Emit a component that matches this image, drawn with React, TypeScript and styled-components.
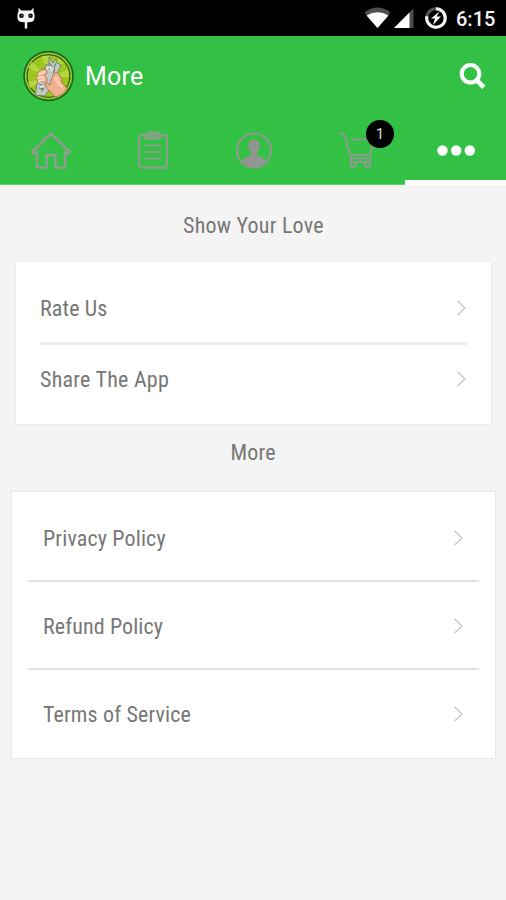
import React from "react";
import styled, { createGlobalStyle } from "styled-components";

const Global = createGlobalStyle`
  * { box-sizing: border-box; }
  body { margin: 0; background: #f4f4f4; font-family: Roboto, "Liberation Sans", sans-serif; }
`;

const Screen = styled.div`
  width: 506px;
  height: 900px;
  background: #f4f4f4;
  display: flex;
  flex-direction: column;
  overflow: hidden;
`;

const StatusBar = styled.div`
  height: 36px;
  flex: none;
  background: #000;
  display: flex;
  align-items: center;
  padding: 0 11px 0 16px;
`;

const StatusIcons = styled.div`
  margin-left: auto;
  display: flex;
  align-items: center;
`;

const Clock = styled.span`
  color: #f2f2f2;
  font-size: 20px;
  font-weight: 500;
  line-height: 36px;
  width: 39px;
  margin-left: 8px;
  padding-top: 2px;
  white-space: nowrap;
`;

const Header = styled.header`
  height: 149px;
  flex: none;
  background: #33c145;
  display: flex;
  flex-direction: column;
`;

const TitleBar = styled.div`
  height: 80px;
  display: flex;
  align-items: center;
  padding: 0 20px 0 22px;
`;

const Title = styled.h1`
  margin: 0 auto 0 10px;
  padding-top: 1px;
  color: #fff;
  font-size: 25px;
  font-weight: 400;
  letter-spacing: 0.2px;
  line-height: 30px;
`;

const Tabs = styled.nav`
  height: 69px;
  display: grid;
  grid-template-columns: 101px 101px 101px 102px 101px;
`;

const Tab = styled.div<{ $active?: boolean; $shift?: number }>`
  position: relative;
  display: flex;
  justify-content: center;
  padding: 15px 0 0 ${(p) => p.$shift ?? 0}px;
  border-bottom: ${(p) => (p.$active ? "5px solid #fff" : "1px solid #5fce6d")};
`;

const Badge = styled.span`
  position: absolute;
  left: 63px;
  top: 4px;
  width: 28px;
  height: 28px;
  border-radius: 50%;
  background: #000;
  color: #ddd;
  font-size: 15px;
  line-height: 28px;
  text-align: center;
`;

const Condensed = styled.span<{ $width: number; $spacing: number }>`
  display: block;
  width: ${(p) => p.$width}px;
  padding-top: 2px;
  font-size: 22px;
  font-stretch: 75%;
  font-weight: 400;
  letter-spacing: ${(p) => p.$spacing}px;
  line-height: 28px;
  color: #777;
  white-space: nowrap;
`;

const SectionHead = styled.h2<{ $height: number; $top: number }>`
  margin: 0;
  flex: none;
  height: ${(p) => p.$height}px;
  padding-top: ${(p) => p.$top}px;
  display: flex;
  justify-content: center;
  font-weight: 400;
`;

const Card = styled.section<{ $wide?: boolean }>`
  flex: none;
  background: #fff;
  border: ${(p) => (p.$wide ? "1px solid #e9e9e9" : "1px solid #ededed")};
  height: ${(p) => (p.$wide ? 268 : 164)}px;
  margin: ${(p) => (p.$wide ? "0 10px 0 11px" : "0 14px 0 15px")};
  padding: ${(p) => (p.$wide ? "2px 16px 0" : "11px 24px 0")};
`;

const Row = styled.div<{ $wide?: boolean; $height: number; $line?: boolean }>`
  height: ${(p) => p.$height}px;
  display: flex;
  align-items: center;
  justify-content: space-between;
  padding: ${(p) => (p.$wide ? "2px 15px 0" : "0 0 0 0")};
  border-bottom: ${(p) => (!p.$line ? "none" : p.$wide ? "2px solid #e2e2e2" : "3px solid #eee")};
`;

const Chevron = () => (
  <svg width="11" height="18" viewBox="0 0 11 18" fill="none" stroke="#cbcbcb" strokeWidth="1.6">
    <path d="M1.5 1.8 8.800 9 1.5 16.200" />
  </svg>
);

const Logo = () => (
  <svg width="53" height="53" viewBox="0 0 53 53">
    <circle cx="26.5" cy="26" r="25.3" fill="#17661f" />
    <circle cx="26.5" cy="26" r="23.6" fill="#a8cc35" />
    <circle cx="26.5" cy="26" r="21.4" fill="#9bc61f" stroke="#315f18" strokeWidth="1.3" />
    <g fill="#b4d640">
      <path d="M26 27 20 6h8zM26 27 36 8l6 5zM26 27l20-7 1 7zM26 27 6 18l4-6zM26 27 6 32l2 6zM26 27l7 20 7-4z" />
    </g>
    <path d="m22 22 2-8 3 2V7l4 6 3-4 1 4 4 2-4 9-4 10-8 12-10-1 2-11z" fill="#c3c9c0" stroke="#69745f" strokeWidth=".8" />
    <path d="m27 13 3 3m4-3-2 5m-6 0 4 2m3-1-2 4M17 34l4 2m-4 2 5 1m-3 2 3-3" stroke="#6f7b6c" strokeWidth="1.200" fill="none" />
    <path d="m28 17 2 4m-6-1 3-3m-9 20 4-1" stroke="#f0f2ec" strokeWidth="1.500" fill="none" />
    <path d="M16 24c1-4 4-5 8-5l1 4-3 3c3 0 4 4 2 7l4 2c0-4 2-6 3-10l3-3c4 2 6 6 6 11l5 5c-3 6-7 8-12 9-2-4-7-6-9-10-1-3-2-5-4-6-5 2-6-1-4-4-2-1-2-2 0-3z" fill="#efb08d" stroke="#965e3c" strokeWidth=".7" />
    <path d="m17 24 6-2m-7 6 6-1m-5 4 5-1" stroke="#f9d8be" strokeWidth="2" strokeLinecap="round" />
    <path d="M33 27c3 4 2 7 8 10" stroke="#f8c8aa" strokeWidth="3.500" fill="none" />
  </svg>
);

const CidIcon = () => (
  <svg width="20" height="24" viewBox="0 0 20 24">
    <path d="M2.500 1.500 5 4.500h10l2.500-3v4c1.500 3 1.500 8-.5 9.800-2 1.400-12 1.400-14 0-2-1.800-2-6.800-.5-9.800z" fill="#f4f4f4" />
    <path d="M10 15v6.500" stroke="#f4f4f4" strokeWidth="2.500" strokeLinecap="round" />
    <circle cx="5.500" cy="9.800" r="2.300" />
    <circle cx="14.500" cy="9.800" r="2.300" />
    <circle cx="5.800" cy="9.800" r=".7" fill="#aaa" />
    <circle cx="14.200" cy="9.800" r=".7" fill="#aaa" />
  </svg>
);

const SystemIcons = () => (
  <svg width="84" height="28" viewBox="364 4 84 28">
    <path d="M364.500 12.500q13-10 26 0L377.500 28z" fill="#505050" />
    <path d="M366.500 15.500q11-6.500 22 0L377.500 28z" fill="#fff" />
    <path d="M413.500 8.500V28H394z" fill="#4c4c4c" />
    <path d="M409.500 12.500V28H394z" fill="#fff" />
    <circle cx="436" cy="18" r="9.300" fill="none" stroke="#555" strokeWidth="3" />
    <path d="M436 8.700a9.300 9.300 0 1 1-9.200 7.600" fill="none" stroke="#f4f4f4" strokeWidth="3" />
    <path d="m439.500 11.500-8.500 7h4l-2 6.500 8-8.500h-4.500z" fill="#fff" />
  </svg>
);

const SearchIcon = () => (
  <svg width="27" height="27" viewBox="0 0 27 27" fill="none" stroke="#fff">
    <circle cx="11.500" cy="10.800" r="8.800" strokeWidth="4" />
    <path d="m17.500 17 7.300 7.300" strokeWidth="4.700" />
  </svg>
);

const HomeIcon = () => (
  <svg width="42" height="40" viewBox="0 0 42 40" fill="none" stroke="#8f9c8f" strokeWidth="2.500" strokeLinejoin="round">
    <path d="M21 2.500 2 21q2 2.500 5 0V36.500h9.500V24h9V36.500H35V21q3 2.500 5 0z" />
  </svg>
);

const OrdersIcon = () => (
  <svg width="32" height="40" viewBox="0 0 32 40" fill="none" stroke="#8a9f8a" strokeWidth="2.300">
    <path d="M9 4H5Q2 4 2 7v26.500q0 3 3 3h22q3 0 3-3V7q0-3-3-3h-4" />
    <path d="M10 3.500q0-2 2-2h8q2 0 2 2l2 3q-1 1-3 1H11Q9 7.500 8 6.500z" fill="#71af76" />
    <path d="M7.500 14.500h17m-17 6.500h17m-17 6.500h17" strokeWidth="2" />
  </svg>
);

const AccountIcon = () => (
  <svg width="38" height="40" viewBox="0 0 38 40">
    <circle cx="19" cy="19.500" r="17" fill="none" stroke="#8f988f" strokeWidth="2.200" />
    <path d="M19 8.500c4 0 6 3 5.600 7-.3 3-1.300 4.600-2.400 5.700v3.200c4 1.300 7 2.100 8.800 6.100-3 4-7 6-12 6s-9-2-12-6c1.800-4 4.800-4.800 8.800-6.100v-3.200c-1.100-1.100-2.100-2.700-2.400-5.700C13 11.500 15 8.500 19 8.500z" fill="#929592" />
  </svg>
);

const CartIcon = () => (
  <svg width="38" height="40" viewBox="0 0 38 40" fill="none" stroke="#899b8a" strokeWidth="2.200">
    <path d="M1 2.500h3q2 0 2.700 2L13 27.500h20M13 8.500h23L32 24H12M12.500 27v4h20v-3.500" strokeLinejoin="round" />
    <circle cx="15.500" cy="33.500" r="2.700" />
    <circle cx="29.500" cy="33.500" r="2.700" />
  </svg>
);

const DotsIcon = () => (
  <svg width="40" height="40" viewBox="0 0 40 40" fill="#fff">
    <circle cx="6.500" cy="19.500" r="5.200" />
    <circle cx="20.200" cy="19.500" r="5.200" />
    <circle cx="33.800" cy="19.500" r="5.200" />
  </svg>
);

export default function App() {
  return (
    <Screen>
      <Global />
      <StatusBar>
        <CidIcon />
        <StatusIcons>
          <SystemIcons />
          <Clock>6:15</Clock>
        </StatusIcons>
      </StatusBar>
      <Header>
        <TitleBar>
          <Logo />
          <Title>More</Title>
          <SearchIcon />
        </TitleBar>
        <Tabs>
          <Tab $shift={1}><HomeIcon /></Tab>
          <Tab $shift={2}><OrdersIcon /></Tab>
          <Tab $shift={2}><AccountIcon /></Tab>
          <Tab $shift={6}><CartIcon /><Badge>1</Badge></Tab>
          <Tab $active><DotsIcon /></Tab>
        </Tabs>
      </Header>
      <SectionHead $height={76} $top={25}><Condensed $width={140} $spacing={0.22}>Show Your Love</Condensed></SectionHead>
      <Card>
        <Row $height={72} $line><Condensed $width={67} $spacing={0.15}>Rate Us</Condensed><Chevron /></Row>
        <Row $height={68}><Condensed $width={129} $spacing={0.25}>Share The App</Condensed><Chevron /></Row>
      </Card>
      <SectionHead $height={66} $top={12}><Condensed $width={45} $spacing={0.2}>More</Condensed></SectionHead>
      <Card $wide>
        <Row $wide $height={88} $line><Condensed $width={124} $spacing={0.15}>Privacy Policy</Condensed><Chevron /></Row>
        <Row $wide $height={88} $line><Condensed $width={121} $spacing={0.1}>Refund Policy</Condensed><Chevron /></Row>
        <Row $wide $height={85}><Condensed $width={148} $spacing={0.15}>Terms of Service</Condensed><Chevron /></Row>
      </Card>
    </Screen>
  );
}
